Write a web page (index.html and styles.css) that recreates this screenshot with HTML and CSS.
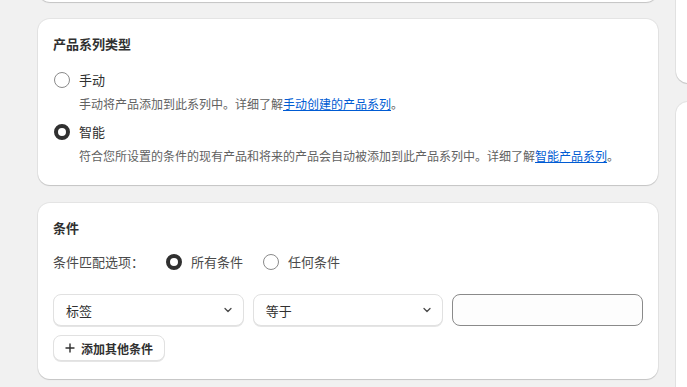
FILE: index.html
```html
<!DOCTYPE html>
<html lang="zh-CN">
<head>
    <meta charset="UTF-8">
    <meta name="viewport" content="width=device-width, initial-scale=1.0">
    <title>产品系列</title>
    <link rel="stylesheet" href="styles.css">
</head>
<body>

    <div class="page">
        <!-- Colonne principale -->
        <div class="main">
            <div class="card card-top"></div>

            <div class="card">
                <h2 class="card-title">产品系列类型</h2>

                <div class="options">
                    <div class="option">
                        <label class="radio-row">
                            <span class="radio"></span>
                            <span>手动</span>
                        </label>
                        <p class="help">手动将产品添加到此系列中。详细了解<a href="#">手动创建的产品系列</a>。</p>
                    </div>

                    <div class="option">
                        <label class="radio-row">
                            <span class="radio checked"></span>
                            <span>智能</span>
                        </label>
                        <p class="help">符合您所设置的条件的现有产品和将来的产品会自动被添加到此产品系列中。详细了解<a href="#">智能产品系列</a>。</p>
                    </div>
                </div>
            </div>

            <div class="card card-conditions">
                <h2 class="card-title">条件</h2>

                <div class="match">
                    <span class="match-label">条件匹配选项：</span>
                    <label class="radio-row">
                        <span class="radio checked"></span>
                        <span>所有条件</span>
                    </label>
                    <label class="radio-row">
                        <span class="radio"></span>
                        <span>任何条件</span>
                    </label>
                </div>

                <div class="rule">
                    <div class="select">
                        <span>标签</span>
                        <svg class="chevron" viewBox="0 0 10 10" width="10" height="10"><path d="M2 3.5 5 6.5 8 3.5" fill="none" stroke="#4a4a4a" stroke-width="1.3" stroke-linecap="round" stroke-linejoin="round"/></svg>
                    </div>
                    <div class="select">
                        <span>等于</span>
                        <svg class="chevron" viewBox="0 0 10 10" width="10" height="10"><path d="M2 3.5 5 6.5 8 3.5" fill="none" stroke="#4a4a4a" stroke-width="1.3" stroke-linecap="round" stroke-linejoin="round"/></svg>
                    </div>
                    <input class="text-input" type="text">
                </div>

                <button class="btn" type="button">
                    <svg viewBox="0 0 10 10" width="10" height="10"><path d="M5 1v8M1 5h8" fill="none" stroke="#303030" stroke-width="1.4" stroke-linecap="round"/></svg>
                    添加其他条件
                </button>
            </div>
        </div>

        <!-- Colonne latérale -->
        <div class="side">
            <div class="card side-a"></div>
            <div class="card side-b"></div>
        </div>
    </div>

</body>
</html>
```

FILE: styles.css
```css
/* Page */
body {
    margin: 0;
    background: #f1f1f1;
    font-family: Inter, "Noto Sans CJK SC", sans-serif;
    color: #303030;
    overflow: hidden;
}

.page {
    display: flex;
    gap: 18px;
    padding-left: 38px;
}

.main {
    width: 620px;
    flex-shrink: 0;
    display: flex;
    flex-direction: column;
    gap: 17px;
}

.side {
    width: 300px;
    flex-shrink: 0;
    display: flex;
    flex-direction: column;
    gap: 19px;
}

/* Cartes */
.card {
    background: #fff;
    border-radius: 12px;
    box-shadow: 0 1px 1px rgba(0, 0, 0, 0.14), 0 0 0 1px rgba(0, 0, 0, 0.05);
    padding: 15px 15px 18px;
    box-sizing: border-box;
}

.card-top {
    height: 40px;
    margin-top: -38px;
    padding: 0;
}

.card-conditions {
    margin-top: 1px;
    padding-bottom: 18px;
}

.side-a {
    height: 120px;
    margin-top: -37px;
}

.side-b {
    height: 300px;
}

.card-title {
    margin: 0;
    font-size: 13px;
    line-height: 20px;
    font-weight: 650;
}

/* Boutons radio */
.options {
    margin-top: 16px;
    display: flex;
    flex-direction: column;
    gap: 7px;
}

.radio-row {
    display: flex;
    align-items: center;
    gap: 9px;
    font-size: 13px;
    line-height: 20px;
    padding-left: 1px;
}

.radio {
    width: 16px;
    height: 16px;
    border-radius: 50%;
    border: 1px solid #8a8a8a;
    box-sizing: border-box;
    background: #fff;
    flex-shrink: 0;
}

.radio.checked {
    border: 4.5px solid #303030;
}

.help {
    margin: 4px 0 0 26px;
    font-size: 12px;
    line-height: 21px;
    color: #616161;
}

.help a {
    color: #005bd3;
    text-decoration: underline;
}

/* Conditions */
.match {
    margin-top: 14px;
    display: flex;
    align-items: center;
    gap: 19px;
    font-size: 13px;
    line-height: 20px;
    color: #4a4a4a;
}

.match-label {
    margin-right: 2px;
}

.rule {
    margin-top: 22px;
    display: grid;
    grid-template-columns: repeat(3, minmax(0, 1fr));
    gap: 9px;
}

.select {
    height: 32px;
    box-sizing: border-box;
    border: 1px solid #e1e1e1;
    border-radius: 8px;
    box-shadow: 0 1px 0 rgba(0, 0, 0, 0.1);
    display: flex;
    align-items: center;
    justify-content: space-between;
    padding: 0 10px 0 12px;
    font-size: 13px;
    background: #fff;
}

.chevron {
    display: block;
}

.text-input {
    display: block;
    width: 100%;
    height: 32px;
    box-sizing: border-box;
    border: 1px solid #8a8a8a;
    border-radius: 8px;
    background: #fdfdfd;
    margin: 0;
    font: inherit;
}

.btn {
    margin-top: 9px;
    height: 26px;
    display: flex;
    align-items: center;
    gap: 6px;
    padding: 0 11px 0 11px;
    border: 1px solid #e1e1e1;
    border-radius: 8px;
    background: #fff;
    box-shadow: 0 1px 0 rgba(0, 0, 0, 0.1);
    font-family: inherit;
    font-size: 12px;
    font-weight: 600;
    color: #303030;
}
```
